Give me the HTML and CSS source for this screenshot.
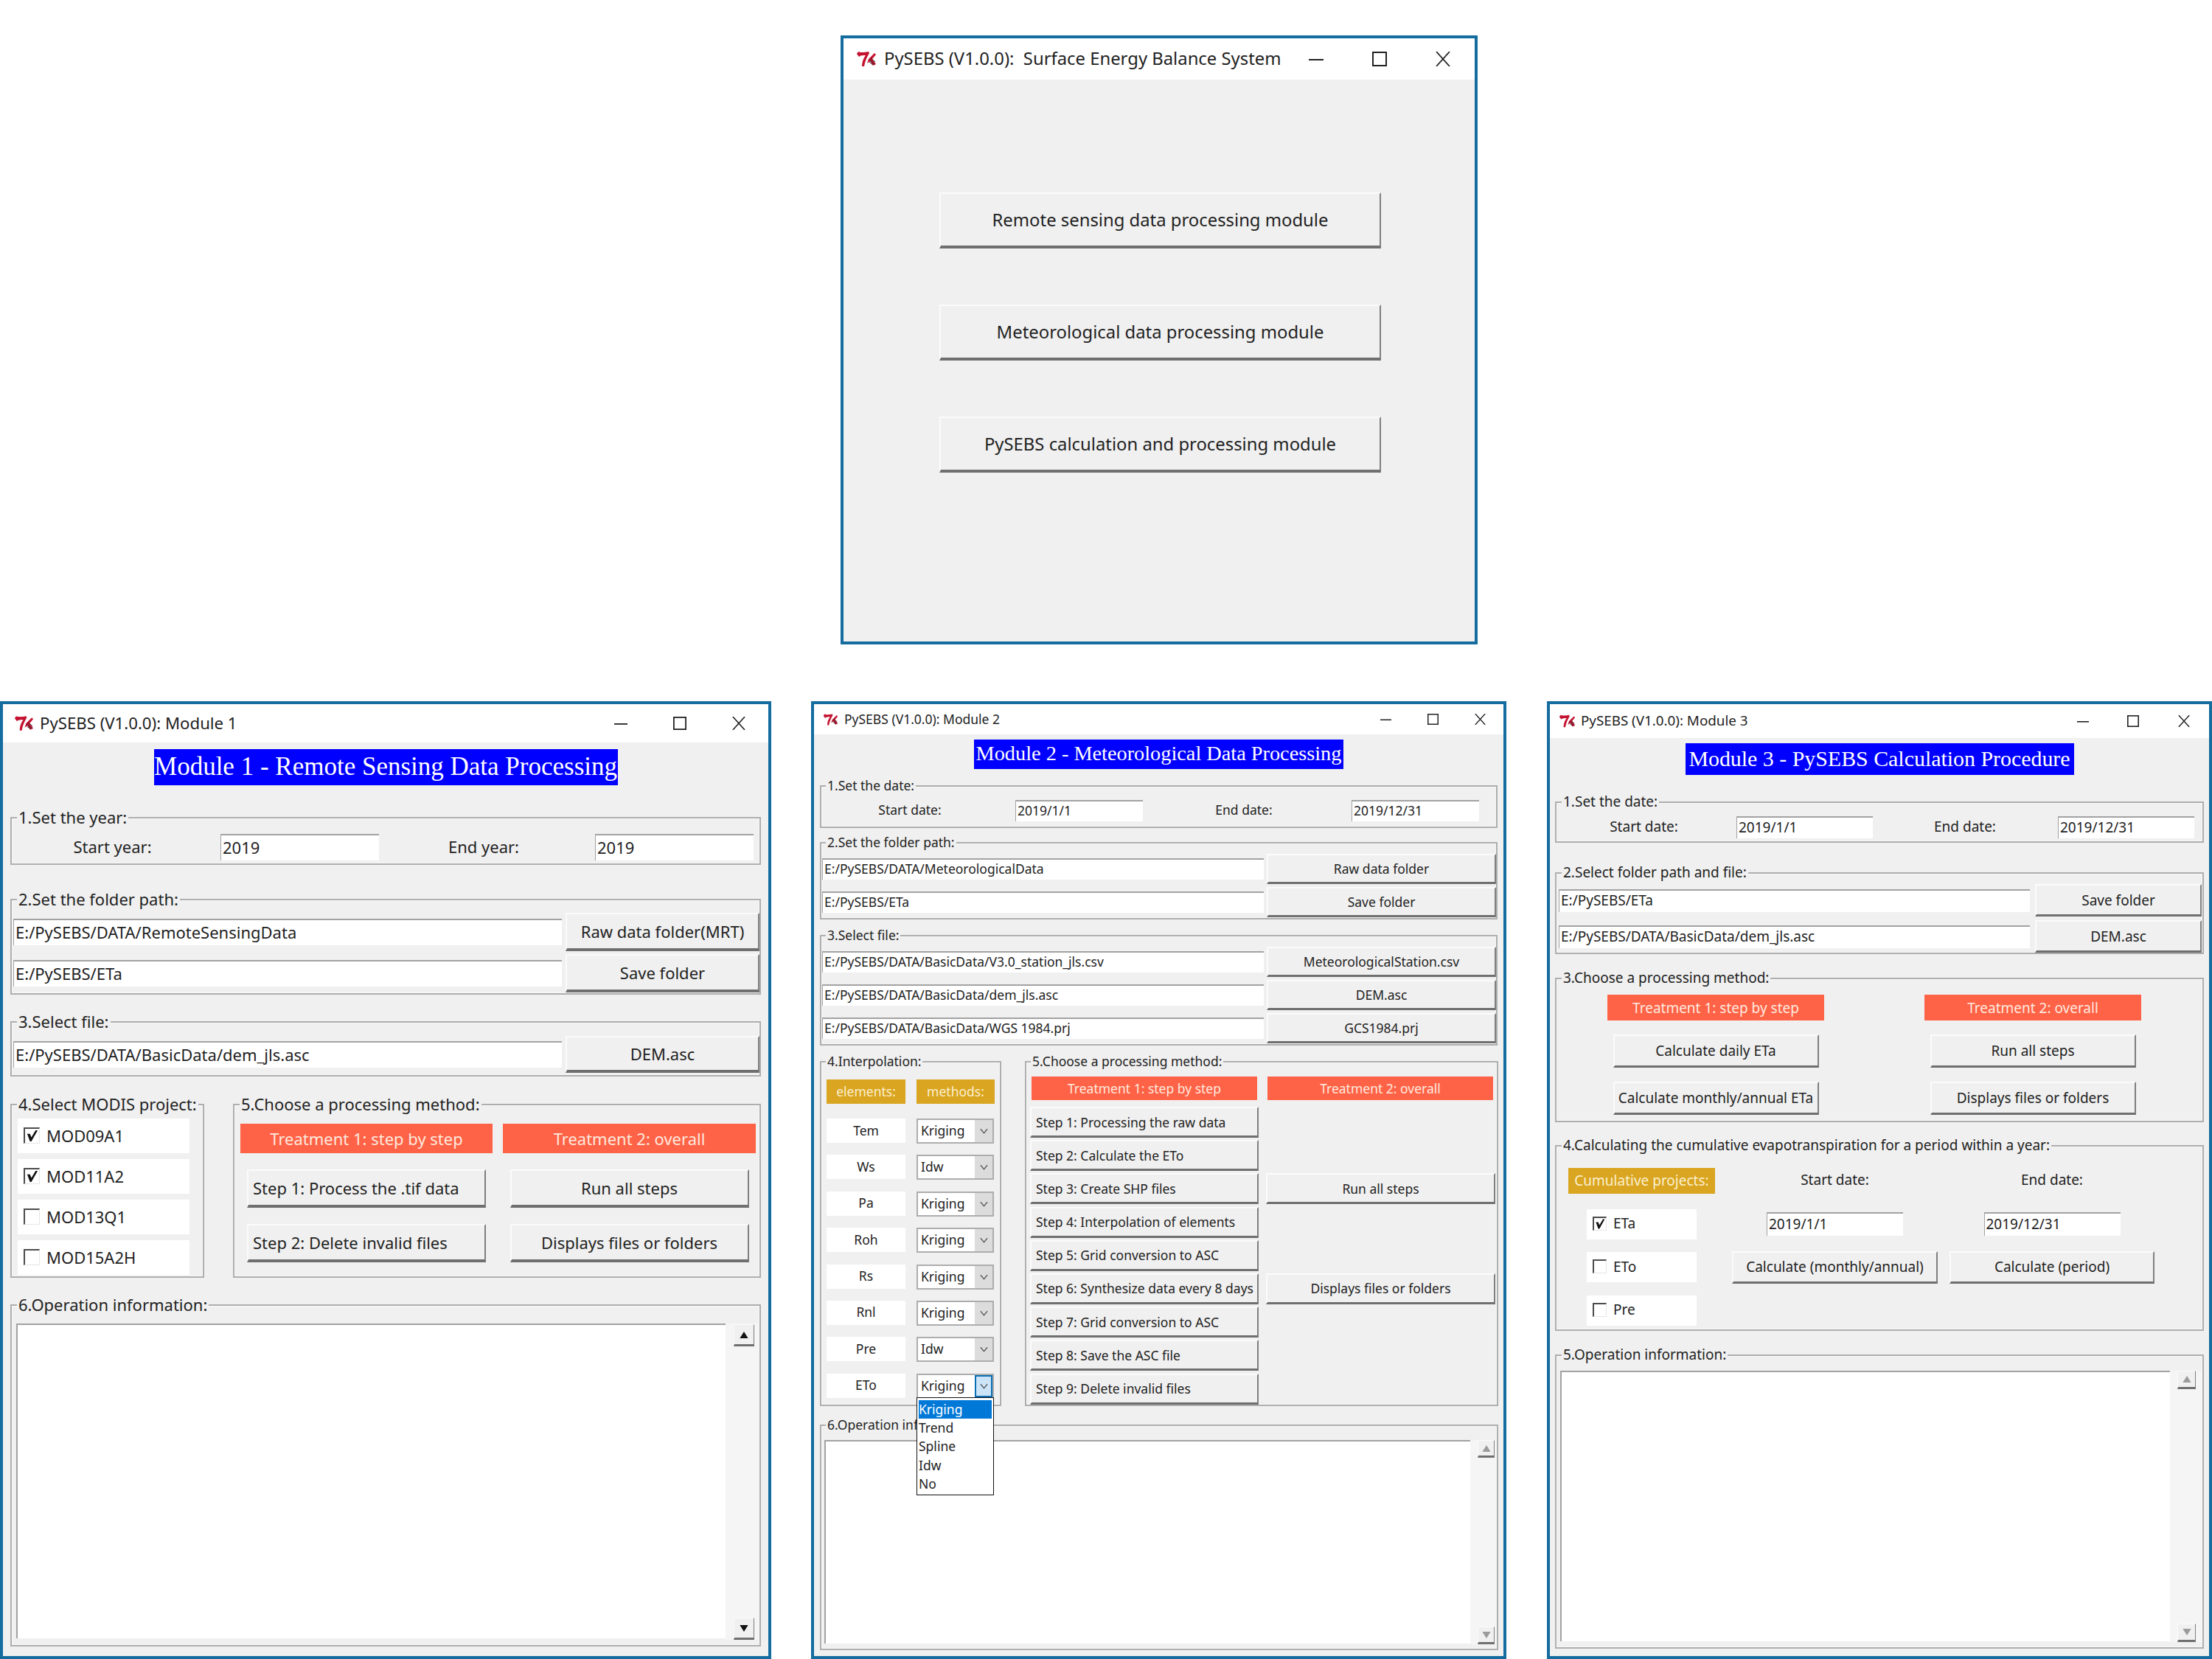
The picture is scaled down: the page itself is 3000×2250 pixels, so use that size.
FILE: index.html
```html
<!DOCTYPE html>
<html lang="en">
<head>
    <meta charset="UTF-8">
    <title>PySEBS (V1.0.0)</title>
    <link rel="stylesheet" href="styles.css">
</head>
<body>
    <!-- shared window icons -->
    <svg class="sprite" xmlns="http://www.w3.org/2000/svg">
        <symbol id="tk" viewBox="0 0 28 22">
            <path d="M1 4 L3 1 C6 2.5 12 2 17 1 L18 3 C15 8 12 14 11 21 L8 21 C8 15 10 10 13 6 C9 6 6 6 4 8 Z" fill="#c4122f"/>
            <path d="M25 3 L17 11 L15 17 L19 14 L23 20 L27 18 L22 11 L27 5 Z" fill="#c4122f"/>
            <path d="M18 12 L25 18 M20 10 L26 15 M18 15 L23 19" stroke="#2a2a2a" stroke-width="1"/>
        </symbol>
        <symbol id="min" viewBox="0 0 20 20"><path d="M0 11 H20" stroke="#222" stroke-width="2"/></symbol>
        <symbol id="max" viewBox="0 0 20 20"><rect x="1" y="1" width="18" height="18" fill="none" stroke="#222" stroke-width="2"/></symbol>
        <symbol id="close" viewBox="0 0 20 20"><path d="M1 0 L19 20 M19 0 L1 20" stroke="#222" stroke-width="1.8"/></symbol>
        <symbol id="check" viewBox="0 0 20 20"><path d="M3 7 L7 7 L9 12 L15 2 L18 2 L9 18 L7 18 Z" fill="#111"/></symbol>
        <symbol id="chevron" viewBox="0 0 12 8"><path d="M1 1 L6 7 L11 1" fill="none" stroke="#555" stroke-width="1.3"/></symbol>
        <symbol id="tri-up" viewBox="0 0 10 8"><path d="M5 0 L10 8 H0 Z"/></symbol>
        <symbol id="tri-down" viewBox="0 0 10 8"><path d="M0 0 H10 L5 8 Z"/></symbol>
    </svg>

    <!-- Launcher -->
    <section class="win win-main">
        <div class="titlebar">
            <svg class="tk"><use href="#tk"/></svg>
            <span class="title">PySEBS (V1.0.0):&nbsp; Surface Energy Balance System</span>
            <div class="controls">
                <span><svg><use href="#min"/></svg></span>
                <span><svg><use href="#max"/></svg></span>
                <span><svg><use href="#close"/></svg></span>
            </div>
        </div>
        <div class="main-buttons">
            <button>Remote sensing data processing module</button>
            <button>Meteorological data processing module</button>
            <button>PySEBS calculation and processing module</button>
        </div>
    </section>

    <!-- Module 1 -->
    <section class="win win-1">
        <div class="titlebar">
            <svg class="tk"><use href="#tk"/></svg>
            <span class="title">PySEBS (V1.0.0): Module 1</span>
            <div class="controls">
                <span><svg><use href="#min"/></svg></span>
                <span><svg><use href="#max"/></svg></span>
                <span><svg><use href="#close"/></svg></span>
            </div>
        </div>
        <h1 class="banner">Module 1 - Remote Sensing Data Processing</h1>

        <div class="group g-year">
            <span class="legend">1.Set the year:</span>
            <div class="date-row">
                <span class="cap">Start year:</span><div class="entry">2019</div>
                <span class="cap">End year:</span><div class="entry">2019</div>
            </div>
        </div>

        <div class="group g-path">
            <span class="legend">2.Set the folder path:</span>
            <div class="path-rows">
                <div class="entry">E:/PySEBS/DATA/RemoteSensingData</div><button>Raw data folder(MRT)</button>
                <div class="entry">E:/PySEBS/ETa</div><button>Save folder</button>
            </div>
        </div>

        <div class="group g-file">
            <span class="legend">3.Select file:</span>
            <div class="path-rows">
                <div class="entry">E:/PySEBS/DATA/BasicData/dem_jls.asc</div><button>DEM.asc</button>
            </div>
        </div>

        <div class="split">
            <div class="group g-modis">
                <span class="legend">4.Select MODIS project:</span>
                <label class="check"><span class="box"><svg><use href="#check"/></svg></span>MOD09A1</label>
                <label class="check"><span class="box"><svg><use href="#check"/></svg></span>MOD11A2</label>
                <label class="check"><span class="box"></span>MOD13Q1</label>
                <label class="check"><span class="box"></span>MOD15A2H</label>
            </div>
            <div class="group g-method">
                <span class="legend">5.Choose a processing method:</span>
                <div class="method-grid">
                    <div class="tag-red">Treatment 1: step by step</div>
                    <div class="tag-red">Treatment 2: overall</div>
                    <button class="left">Step 1: Process the .tif data</button>
                    <button>Run all steps</button>
                    <button class="left">Step 2: Delete invalid files</button>
                    <button>Displays files or folders</button>
                </div>
            </div>
        </div>

        <div class="group g-log">
            <span class="legend">6.Operation information:</span>
            <div class="log">
                <div class="textbox"></div>
                <div class="scrollbar">
                    <span class="arrow"><svg><use href="#tri-up"/></svg></span>
                    <span class="arrow"><svg><use href="#tri-down"/></svg></span>
                </div>
            </div>
        </div>
    </section>

    <!-- Module 2 -->
    <section class="win win-2">
        <div class="titlebar">
            <svg class="tk"><use href="#tk"/></svg>
            <span class="title">PySEBS (V1.0.0): Module 2</span>
            <div class="controls">
                <span><svg><use href="#min"/></svg></span>
                <span><svg><use href="#max"/></svg></span>
                <span><svg><use href="#close"/></svg></span>
            </div>
        </div>
        <h1 class="banner">Module 2 - Meteorological Data Processing</h1>

        <div class="group g-date">
            <span class="legend">1.Set the date:</span>
            <div class="date-row">
                <span class="cap">Start date:</span><div class="entry">2019/1/1</div>
                <span class="cap">End date:</span><div class="entry">2019/12/31</div>
            </div>
        </div>

        <div class="group g-path">
            <span class="legend">2.Set the folder path:</span>
            <div class="path-rows">
                <div class="entry">E:/PySEBS/DATA/MeteorologicalData</div><button>Raw data folder</button>
                <div class="entry">E:/PySEBS/ETa</div><button>Save folder</button>
            </div>
        </div>

        <div class="group g-file">
            <span class="legend">3.Select file:</span>
            <div class="path-rows">
                <div class="entry">E:/PySEBS/DATA/BasicData/V3.0_station_jls.csv</div><button>MeteorologicalStation.csv</button>
                <div class="entry">E:/PySEBS/DATA/BasicData/dem_jls.asc</div><button>DEM.asc</button>
                <div class="entry">E:/PySEBS/DATA/BasicData/WGS 1984.prj</div><button>GCS1984.prj</button>
            </div>
        </div>

        <div class="split">
            <div class="group g-interp">
                <span class="legend">4.Interpolation:</span>
                <div class="interp-head">
                    <div class="tag-gold">elements:</div>
                    <div class="tag-gold">methods:</div>
                </div>
                <div class="interp-rows">
                    <div class="cell">Tem</div><div class="combo"><span>Kriging</span><i><svg><use href="#chevron"/></svg></i></div>
                    <div class="cell">Ws</div><div class="combo"><span>Idw</span><i><svg><use href="#chevron"/></svg></i></div>
                    <div class="cell">Pa</div><div class="combo"><span>Kriging</span><i><svg><use href="#chevron"/></svg></i></div>
                    <div class="cell">Roh</div><div class="combo"><span>Kriging</span><i><svg><use href="#chevron"/></svg></i></div>
                    <div class="cell">Rs</div><div class="combo"><span>Kriging</span><i><svg><use href="#chevron"/></svg></i></div>
                    <div class="cell">Rnl</div><div class="combo"><span>Kriging</span><i><svg><use href="#chevron"/></svg></i></div>
                    <div class="cell">Pre</div><div class="combo"><span>Idw</span><i><svg><use href="#chevron"/></svg></i></div>
                    <div class="cell">ETo</div>
                    <div class="combo open">
                        <span>Kriging</span><i><svg><use href="#chevron"/></svg></i>
                        <ul class="menu">
                            <li class="selected">Kriging</li>
                            <li>Trend</li>
                            <li>Spline</li>
                            <li>Idw</li>
                            <li>No</li>
                        </ul>
                    </div>
                </div>
            </div>
            <div class="group g-steps">
                <span class="legend">5.Choose a processing method:</span>
                <div class="step-head">
                    <div class="tag-red">Treatment 1: step by step</div>
                    <div class="tag-red">Treatment 2: overall</div>
                </div>
                <div class="step-grid">
                    <button class="left">Step 1: Processing the raw data</button>
                    <button class="left">Step 2: Calculate the ETo</button>
                    <button class="left">Step 3: Create SHP files</button>
                    <button class="left">Step 4: Interpolation of elements</button>
                    <button class="left">Step 5: Grid conversion to ASC</button>
                    <button class="left">Step 6: Synthesize data every 8 days</button>
                    <button class="left">Step 7: Grid conversion to ASC</button>
                    <button class="left">Step 8: Save the ASC file</button>
                    <button class="left">Step 9: Delete invalid files</button>
                    <button class="run-all">Run all steps</button>
                    <button class="show-files">Displays files or folders</button>
                </div>
            </div>
        </div>

        <div class="group g-log">
            <span class="legend">6.Operation information:</span>
            <div class="log">
                <div class="textbox"></div>
                <div class="scrollbar dim">
                    <span class="arrow"><svg><use href="#tri-up"/></svg></span>
                    <span class="arrow"><svg><use href="#tri-down"/></svg></span>
                </div>
            </div>
        </div>
    </section>

    <!-- Module 3 -->
    <section class="win win-3">
        <div class="titlebar">
            <svg class="tk"><use href="#tk"/></svg>
            <span class="title">PySEBS (V1.0.0): Module 3</span>
            <div class="controls">
                <span><svg><use href="#min"/></svg></span>
                <span><svg><use href="#max"/></svg></span>
                <span><svg><use href="#close"/></svg></span>
            </div>
        </div>
        <h1 class="banner">Module 3 - PySEBS Calculation Procedure</h1>

        <div class="group g-date">
            <span class="legend">1.Set the date:</span>
            <div class="date-row">
                <span class="cap">Start date:</span><div class="entry">2019/1/1</div>
                <span class="cap">End date:</span><div class="entry">2019/12/31</div>
            </div>
        </div>

        <div class="group g-path">
            <span class="legend">2.Select folder path and file:</span>
            <div class="path-rows">
                <div class="entry">E:/PySEBS/ETa</div><button>Save folder</button>
                <div class="entry">E:/PySEBS/DATA/BasicData/dem_jls.asc</div><button>DEM.asc</button>
            </div>
        </div>

        <div class="group g-method">
            <span class="legend">3.Choose a processing method:</span>
            <div class="method-grid">
                <div class="tag-red">Treatment 1: step by step</div>
                <div class="tag-red">Treatment 2: overall</div>
                <button>Calculate daily ETa</button>
                <button>Run all steps</button>
                <button>Calculate monthly/annual ETa</button>
                <button>Displays files or folders</button>
            </div>
        </div>

        <div class="group g-cumul">
            <span class="legend">4.Calculating the cumulative evapotranspiration for a period within a year:</span>
            <div class="cumul-grid">
                <div class="tag-gold">Cumulative projects:</div>
                <span class="cap c2">Start date:</span>
                <span class="cap c3">End date:</span>
                <label class="check"><span class="box"><svg><use href="#check"/></svg></span>ETa</label>
                <div class="entry c2">2019/1/1</div>
                <div class="entry c3">2019/12/31</div>
                <label class="check"><span class="box"></span>ETo</label>
                <button class="c2">Calculate (monthly/annual)</button>
                <button class="c3">Calculate (period)</button>
                <label class="check"><span class="box"></span>Pre</label>
            </div>
        </div>

        <div class="group g-log">
            <span class="legend">5.Operation information:</span>
            <div class="log">
                <div class="textbox"></div>
                <div class="scrollbar dim">
                    <span class="arrow"><svg><use href="#tri-up"/></svg></span>
                    <span class="arrow"><svg><use href="#tri-down"/></svg></span>
                </div>
            </div>
        </div>
    </section>
</body>
</html>
```

FILE: styles.css
```css
* {
    box-sizing: border-box;
}

html, body {
    margin: 0;
    padding: 0;
    background-color: #fff;
}

body {
    position: relative;
    width: 3000px;
    height: 2250px;
    overflow: hidden;
    font-family: "Noto Sans", "Open Sans", sans-serif;
    color: #222;
}

.sprite {
    display: none;
}

/* windows sit on a free canvas */
.win {
    position: absolute;
    display: flex;
    flex-direction: column;
    align-items: flex-start;
    background-color: #f0f0f0;
    border: 4px solid #146c9f;
    font-size: var(--fs);
}

.win-main {
    --fs: 23.85px;
    left: 1140px;
    top: 48px;
    width: 864px;
    height: 826px;
}

.win-1 {
    --fs: 22px;
    left: 0;
    top: 951px;
    width: 1046px;
    height: 1299px;
}

.win-2 {
    --fs: 17.5px;
    left: 1100px;
    top: 951px;
    width: 943px;
    height: 1299px;
}

.win-3 {
    --fs: 19px;
    left: 2098px;
    top: 951px;
    width: 902px;
    height: 1299px;
}

/* title bar */
.titlebar {
    display: flex;
    align-items: center;
    width: 100%;
    flex: none;
    background-color: #fff;
    height: var(--title-h);
    padding-left: var(--title-pad);
}

.win-main { --title-h: 56px; --title-pad: 16px; --title-fs: 23.85px; --ctl: 86px; --ctl-icon: 20px; --tk-w: 30px; --tk-gap: 9px; }
.win-1 { --title-h: 52px; --title-pad: 15px; --title-fs: 22.2px; --ctl: 80px; --ctl-icon: 18px; --tk-w: 27px; --tk-gap: 8px; }
.win-2 { --title-h: 41px; --title-pad: 12px; --title-fs: 17.5px; --ctl: 64px; --ctl-icon: 15px; --tk-w: 21px; --tk-gap: 8px; }
.win-3 { --title-h: 46px; --title-pad: 12px; --title-fs: 18.8px; --ctl: 68.5px; --ctl-icon: 16px; --tk-w: 23px; --tk-gap: 7px; }

.tk {
    flex: none;
    width: var(--tk-w);
    height: 22px;
    margin-right: var(--tk-gap);
}

.title {
    padding-bottom: 2px;
    font-size: var(--title-fs);
    white-space: nowrap;
}

.controls {
    display: flex;
    margin-left: auto;
}

.controls span {
    display: flex;
    align-items: center;
    justify-content: center;
    width: var(--ctl);
}

.controls svg {
    width: var(--ctl-icon);
    height: var(--ctl-icon);
}

/* blue heading of each module */
.banner {
    align-self: center;
    margin: 0;
    padding-bottom: 2px;
    display: flex;
    align-items: center;
    justify-content: center;
    background-color: #0000ff;
    color: #fff;
    font-family: "Liberation Serif", serif;
    font-weight: normal;
    white-space: nowrap;
}

.win-1 .banner { margin-top: 9px; width: 629px; height: 49px; font-size: 35px; }
.win-2 .banner { margin-top: 7px; width: 501px; height: 40px; font-size: 28.3px; }
.win-3 .banner { margin-top: 7px; width: 527px; height: 43px; font-size: 29.9px; }

/* labelframe */
.group {
    position: relative;
    flex: none;
    border: 2px solid #aeaeae;
    box-shadow: inset 0 0 0 1px #f9f9f9;
}

.legend {
    position: absolute;
    top: -2px;
    left: 7px;
    padding: 0 2px;
    transform: translateY(-50%);
    background-color: #f0f0f0;
    white-space: nowrap;
    line-height: 1.2;
}

/* shared widgets */
button {
    margin: 0;
    padding: 0;
    font: inherit;
    color: inherit;
    white-space: nowrap;
    background-color: #f0f0f0;
    border-style: solid;
    border-width: 2px 2px 4px 2px;
    border-color: #fbfbfb #7f7f7f #6f6f6f #fbfbfb;
    text-align: center;
}

button.left {
    text-align: left;
    padding-left: 6px;
}

.entry {
    display: flex;
    align-items: center;
    background-color: #fff;
    border-top: 2px solid #a2a2a2;
    border-left: 1px solid #a2a2a2;
    padding: 0 0 3px 2px;
    white-space: nowrap;
    overflow: hidden;
}

.cap {
    padding-bottom: 3px;
    text-align: center;
    white-space: nowrap;
}

.tag-red, .tag-gold {
    display: flex;
    align-items: center;
    justify-content: center;
    white-space: nowrap;
}

.tag-red {
    background-color: #ff6347;
    color: #ffe9df;
}

.tag-gold {
    padding-bottom: 2px;
    background-color: #daa520;
    color: #fbf0cf;
}

.check {
    display: flex;
    align-items: center;
    background-color: #fff;
    padding-bottom: 2px;
}

.box {
    flex: none;
    display: flex;
    background-color: #fff;
    border-style: solid;
    border-width: 2px 1px 1px 2px;
    border-color: #4c4c4c #e6e6e6 #e6e6e6 #4c4c4c;
}

.box svg {
    width: 100%;
    height: 100%;
}

.date-row {
    display: grid;
    align-items: center;
}

.path-rows {
    display: grid;
    align-items: center;
}

.split {
    display: flex;
    flex: none;
}

.log {
    display: flex;
}

.textbox {
    flex: none;
    background-color: #fff;
    border-top: 2px solid #a2a2a2;
    border-left: 2px solid #a2a2a2;
}

.scrollbar {
    display: flex;
    flex-direction: column;
    justify-content: space-between;
    background-color: #f5f5f5;
}

.arrow {
    display: flex;
    align-items: center;
    justify-content: center;
    background-color: #f0f0f0;
    border-style: solid;
    border-width: 1px 1px 3px 1px;
    border-color: #fbfbfb #7f7f7f #6f6f6f #fbfbfb;
}

.arrow svg {
    width: 12px;
    height: 9px;
    fill: #111;
}

.dim .arrow svg {
    fill: #9b9b9b;
}

/* launcher */
.main-buttons {
    display: flex;
    flex-direction: column;
    gap: 76px;
    padding: 153px 0 0 130px;
}

.main-buttons button {
    width: 599px;
    height: 76px;
}

/* module 1 */
.win-1 .group { margin-left: 10px; width: 1018px; }
.win-1 .g-year { margin-top: 43px; height: 65px; padding-top: 21px; }
.win-1 .date-row { grid-template-columns: 273px 225px 284px 224px; }
.win-1 .date-row .entry { justify-self: end; width: 215px; height: 36px; }
.win-1 .path-rows { grid-template-columns: 744px 263px; column-gap: 5px; row-gap: 4px; padding-left: 2px; }
.win-1 .path-rows .entry { height: 36px; }
.win-1 .path-rows button { height: 52px; }
.win-1 .g-path { margin-top: 46px; height: 130px; padding-top: 17px; }
.win-1 .g-file { margin-top: 36px; height: 75px; padding-top: 18px; }
.win-1 .g-file button { height: 50px; }
.win-1 .split { margin-top: 37px; margin-left: 10px; gap: 39px; }
.win-1 .split .group { margin-left: 0; height: 236px; }
.win-1 .g-modis { width: 263px !important; display: flex; flex-direction: column; gap: 8px; padding: 18px 0 0 8px; }
.win-1 .g-modis .check { width: 233px; height: 47px; padding-left: 8px; gap: 9px; }
.win-1 .box { width: 22px; height: 22px; }
.win-1 .g-method { width: 716px !important; padding: 25px 0 0 8px; }
.win-1 .method-grid { display: grid; grid-template-columns: 342px 343px; column-gap: 14px; row-gap: 22px; grid-template-rows: 40px 52px 52px; justify-items: center; }
.win-1 .method-grid .tag-red { width: 100%; }
.win-1 .method-grid button { width: 324px; }
.win-1 .g-log { margin-top: 36px; height: 464px; padding: 24px 0 0 6px; }
.win-1 .textbox { width: 962px; height: 427px; }
.win-1 .scrollbar { width: 46px; height: 429px; padding: 1px 7px 0 11px; }
.win-1 .arrow { height: 30px; }

/* module 2 */
.win-2 .group { margin-left: 8px; width: 919px; }
.win-2 .legend { left: 6px; }
.win-2 .g-date { margin-top: 22px; height: 58px; padding-top: 18px; }
.win-2 .date-row { grid-template-columns: 240px 196px 274px 182px; }
.win-2 .date-row .entry { justify-self: end; width: 173px; height: 29px; }
.win-2 .path-rows { grid-template-columns: 599px 311px; column-gap: 4px; row-gap: 4px; padding-left: 1px; }
.win-2 .path-rows .entry { height: 29px; }
.win-2 .path-rows button { height: 41px; border-bottom-width: 3px; }
.win-2 .g-path { margin-top: 19px; height: 105px; padding-top: 14px; }
.win-2 .g-file { margin-top: 21px; height: 150px; padding-top: 14px; }
.win-2 .split { margin-top: 21px; margin-left: 8px; gap: 32px; }
.win-2 .split .group { margin-left: 0; height: 468px; }
.win-2 .g-interp { width: 246px !important; padding: 23px 0 0 7px; }
.win-2 .interp-head { display: flex; gap: 15px; }
.win-2 .interp-head .tag-gold { height: 33px; width: 107px; }
.win-2 .interp-head .tag-gold + .tag-gold { width: 106px; }
.win-2 .interp-rows { display: grid; grid-template-columns: 107px 105px; column-gap: 15px; row-gap: 16.4px; grid-auto-rows: 33px; margin-top: 20px; }
.win-2 .cell { display: flex; align-items: center; justify-content: center; padding-bottom: 2px; background-color: #fff; }
.win-2 .g-steps { width: 642px !important; padding: 19px 0 0 7px; }
.win-2 .step-head { display: flex; gap: 14px; }
.win-2 .step-head .tag-red { width: 306px; height: 32px; }
.win-2 .step-grid { display: grid; grid-template-columns: 310px 311px; grid-template-rows: repeat(9, 42px); column-gap: 10px; row-gap: 3.2px; grid-auto-flow: column; margin: 9px 0 0 -2px; }
.win-2 .step-grid button { border-bottom-width: 3px; }
.win-2 .run-all { grid-column: 2; grid-row: 3; }
.win-2 .show-files { grid-column: 2; grid-row: 6; }
.win-2 .g-log { margin-top: 25px; height: 306px; width: 920px; padding: 19px 0 0 4px; }
.win-2 .textbox { width: 876px; height: 276px; }
.win-2 .scrollbar { width: 36px; height: 277px; padding-left: 10px; padding-right: 3px; }
.win-2 .arrow { height: 24px; }

.combo {
    position: relative;
    display: flex;
    height: 34px;
    background-color: #fff;
    border: 2px solid #adadad;
}

.combo span {
    flex: 1;
    display: flex;
    align-items: center;
    padding: 0 0 2px 4px;
}

.combo i {
    flex: none;
    display: flex;
    align-items: center;
    justify-content: center;
    width: 24px;
    background-color: #dcdcdc;
}

.combo i svg {
    width: 11px;
    height: 8px;
}

.combo.open i {
    background-color: #cce4f7;
    outline: 2px solid #0a6fb5;
    outline-offset: -2px;
}

/* dropdown lies over the operation frame */
.menu {
    position: absolute;
    z-index: 5;
    top: 100%;
    left: -2px;
    width: 105px;
    height: 133px;
    margin: 0;
    padding: 3px 2px 2px;
    list-style: none;
    background-color: #fff;
    border: 1.5px solid #111;
}

.menu li {
    height: 25.3px;
    line-height: 25px;
}

.menu .selected {
    background-color: #0078d7;
    color: #fff;
}

/* module 3 */
.win-3 .group { margin-left: 7px; width: 880px; }
.win-3 .g-date { margin-top: 36px; height: 56px; padding-top: 18px; }
.win-3 .date-row { grid-template-columns: 237px 192px 250px 186px; }
.win-3 .date-row .entry { justify-self: end; width: 185px; height: 30px; }
.win-3 .path-rows { grid-template-columns: 639px 226px; column-gap: 7px; row-gap: 5px; padding-left: 3px; }
.win-3 .path-rows .entry { height: 31px; }
.win-3 .path-rows button { height: 44px; border-bottom-width: 3px; }
.win-3 .g-path { margin-top: 40px; height: 111px; padding-top: 14px; }
.win-3 .g-method { margin-top: 32px; height: 196px; padding: 21px 0 0 69px; }
.win-3 .method-grid { display: grid; grid-template-columns: 294px 294px; grid-template-rows: 35px 45px 45px; column-gap: 136px; row-gap: 19px; justify-items: center; }
.win-3 .method-grid .tag-red { width: 100%; }
.win-3 .method-grid button { width: 279px; border-bottom-width: 3px; }
.win-3 .g-cumul { margin-top: 31px; height: 252px; padding: 26px 0 0 16px; }
.win-3 .cumul-grid { display: grid; grid-template-columns: 199px 23px 279px 16px 278px; grid-template-rows: repeat(4, 41px); row-gap: 17.5px; align-items: center; justify-items: center; }
.win-3 .cumul-grid .c2 { grid-column: 3; }
.win-3 .cumul-grid .c3 { grid-column: 5; }
.win-3 .cumul-grid .tag-gold { width: 199px; height: 35px; }
.win-3 .cumul-grid .entry { width: 185px; height: 32px; }
.win-3 .cumul-grid button { width: 100%; height: 44px; border-bottom-width: 3px; }
.win-3 .cumul-grid .check { grid-column: 1; width: 149px; height: 41px; padding-left: 8px; gap: 9px; }
.win-3 .box { width: 19px; height: 19px; }
.win-3 .g-log { margin-top: 32px; height: 399px; padding: 20px 0 0 5px; }
.win-3 .textbox { width: 827px; height: 367px; }
.win-3 .scrollbar { width: 43px; height: 368px; padding: 0 8px 0 10px; }
.win-3 .arrow { height: 25px; }
```
